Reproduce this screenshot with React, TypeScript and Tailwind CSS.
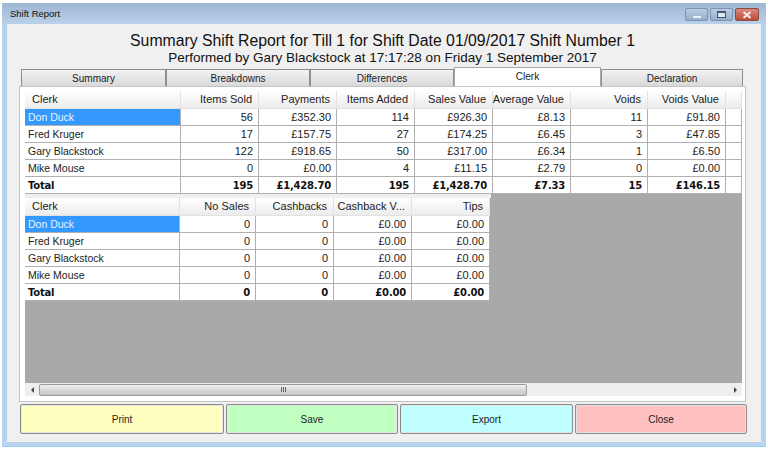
import React from 'react';

interface GridProps {
  columns: string[];
  rows: string[][];
  total: string[];
  gridClass: string;
}

const Grid: React.FC<GridProps> = ({ columns, rows, total, gridClass }) => {
  return (
    <div className={`grid ${gridClass} text-[11px] leading-none text-[#222] whitespace-nowrap`}>
      {columns.map((col, i) => (
        <div
          key={col + i}
          className={`h-[18px] flex items-center bg-gradient-to-b from-white to-[#ececec] border-b border-r border-[#e2e2e2] ${i === 0 ? 'pl-[7px]' : 'justify-end pr-[6px]'}`}
        >
          {col}
        </div>
      ))}
      {rows.map((row, r) =>
        row.map((cell, c) => (
          <div
            key={`${r}-${c}`}
            className={`h-[17px] flex items-center border-b border-r border-[#b0b0b0] ${c === 0 ? 'pl-[3px] text-[10.5px]' : 'justify-end pr-[5px]'} ${c === 0 && r === 0 ? 'bg-[#3399ff] text-[#e8f3ff]' : 'bg-white'}`}
          >
            {cell}
          </div>
        )),
      )}
      {total.map((cell, c) => (
        <div
          key={`t-${c}`}
          className={`h-[17px] flex items-center pt-[1px] bg-white border-b border-r border-[#b0b0b0] font-['DejaVu_Sans',sans-serif] font-bold text-[10px] tracking-[-0.2px] text-[#111] ${c === 0 ? 'pl-[3px]' : 'justify-end pr-[5px]'}`}
        >
          {cell}
        </div>
      ))}
    </div>
  );
};

const tabs = ['Summary', 'Breakdowns', 'Differences', 'Clerk', 'Declaration'];
const tabWidths = ['w-[145px]', 'w-[144px]', 'w-[144px]', 'w-[147px]', 'w-[142px]'];

const buttons = [
  { label: 'Print', cls: 'w-[204px] bg-[#ffffc0]' },
  { label: 'Save', cls: 'w-[172px] bg-[#c0ffc0]' },
  { label: 'Export', cls: 'w-[173px] bg-[#c0ffff]' },
  { label: 'Close', cls: 'w-[172px] bg-[#ffc0c0]' },
];

export default function App() {
  return (
    <div className="w-[768px] h-[449px] bg-white pt-[3px] pl-[2px] font-['Liberation_Sans',sans-serif]">
      <div className="w-[764px] h-[444px] flex flex-col bg-[#b9d3ee] rounded-t-[3px] border-b border-[#8fd4f0]">
        {/* title bar */}
        <div className="h-[21px] shrink-0 flex items-start justify-between pl-[8px] pr-[7px] pt-[5px] bg-gradient-to-b from-[#9db6d2] to-[#b9d1ea]">
          <span className="text-[9.5px] leading-[12px] text-[#111]">Shift Report</span>
          <div className="flex gap-[2px]">
            <div className="w-[23px] h-[13px] flex items-end justify-center pb-[2px] rounded-[2px] border border-[#7d92ac] bg-gradient-to-b from-[#b8cde4] to-[#94aecb]">
              <div className="w-[8px] h-[2px] bg-[#eef3f8]" />
            </div>
            <div className="w-[23px] h-[13px] flex items-center justify-center rounded-[2px] border border-[#7d92ac] bg-gradient-to-b from-[#b8cde4] to-[#94aecb]">
              <div className="w-[9px] h-[7px] border border-t-2 border-[#3f5570] bg-[#dfe8f2]" />
            </div>
            <div className="w-[24px] h-[13px] flex items-center justify-center rounded-[2px] border border-[#8a4a3f] bg-gradient-to-b from-[#d98a7c] to-[#bb4a38]">
              <svg width="10" height="8" viewBox="0 0 10 8">
                <path d="M1.5 1 L8.5 7 M8.5 1 L1.5 7" stroke="#f5f0ee" strokeWidth="2" />
              </svg>
            </div>
          </div>
        </div>

        {/* client area */}
        <div className="mx-[5px] w-[754px] h-[418px] flex flex-col bg-[#f0f0f0] pl-[12px]">
          <div className="w-[727px] h-[43px] shrink-0 flex flex-col items-center text-[#111] pt-[7px]">
            <div className="text-[15.8px] leading-[19px]">Summary Shift Report for Till 1 for Shift Date 01/09/2017 Shift Number 1</div>
            <div className="text-[13.5px] leading-[16px]">Performed by Gary Blackstock at 17:17:28 on Friday 1 September 2017</div>
          </div>

          {/* tabs */}
          <div className="h-[19px] shrink-0 flex items-end pl-[2px]">
            {tabs.map((tab, i) =>
              tab === 'Clerk' ? (
                <div
                  key={tab}
                  className={`${tabWidths[i]} h-[19px] flex items-start justify-center pt-[2px] bg-white border border-b-0 border-[#a8a8a8] text-[10px] leading-[13px] text-[#222]`}
                >
                  {tab}
                </div>
              ) : (
                <div
                  key={tab}
                  className={`${tabWidths[i]} h-[17px] flex items-center justify-center bg-gradient-to-b from-[#f2f2f2] to-[#d9d9d9] border border-b-0 border-[#8e8e8e] text-[10px] text-[#222]`}
                >
                  {tab}
                </div>
              ),
            )}
          </div>

          {/* tab panel */}
          <div className="w-[727px] h-[316px] shrink-0 flex flex-col bg-white border border-[#c4c4c4] pl-[5px] pr-[3px] pt-[4px] pb-[5px]">
            <div className="flex-1 flex flex-col bg-[#a9a9a9]">
              <Grid
                gridClass="grid-cols-[156px_78px_78px_78px_78px_78px_77px_78px_16px]"
                columns={['Clerk', 'Items Sold', 'Payments', 'Items Added', 'Sales Value', 'Average Value', 'Voids', 'Voids Value', '']}
                rows={[
                  ['Don Duck', '56', '£352.30', '114', '£926.30', '£8.13', '11', '£91.80', ''],
                  ['Fred Kruger', '17', '£157.75', '27', '£174.25', '£6.45', '3', '£47.85', ''],
                  ['Gary Blackstock', '122', '£918.65', '50', '£317.00', '£6.34', '1', '£6.50', ''],
                  ['Mike Mouse', '0', '£0.00', '4', '£11.15', '£2.79', '0', '£0.00', ''],
                ]}
                total={['Total', '195', '£1,428.70', '195', '£1,428.70', '£7.33', '15', '£146.15', '']}
              />
              <div className="h-[4px] bg-[#f0f0f0] w-[466px]" />
              <Grid
                gridClass="w-[465px] grid-cols-[155px_76px_78px_78px_78px]"
                columns={['Clerk', 'No Sales', 'Cashbacks', 'Cashback V...', 'Tips']}
                rows={[
                  ['Don Duck', '0', '0', '£0.00', '£0.00'],
                  ['Fred Kruger', '0', '0', '£0.00', '£0.00'],
                  ['Gary Blackstock', '0', '0', '£0.00', '£0.00'],
                  ['Mike Mouse', '0', '0', '£0.00', '£0.00'],
                ]}
                total={['Total', '0', '0', '£0.00', '£0.00']}
              />
            </div>
            {/* scrollbar */}
            <div className="h-[13px] shrink-0 flex items-center bg-[#efefef]">
              <div className="w-[14px] flex justify-center">
                <div className="w-0 h-0 border-y-[3px] border-y-transparent border-r-[3px] border-r-[#444]" />
              </div>
              <div className="w-[488px] h-[12px] flex items-center justify-center rounded-[2px] border border-[#9a9a9a] bg-gradient-to-b from-[#f0f0f0] to-[#c4c4c4]">
                <div className="flex gap-[1px]">
                  <div className="w-[1px] h-[5px] bg-[#666]" />
                  <div className="w-[1px] h-[5px] bg-[#666]" />
                  <div className="w-[1px] h-[5px] bg-[#666]" />
                </div>
              </div>
              <div className="flex-1 flex justify-end pr-[5px]">
                <div className="w-0 h-0 border-y-[3px] border-y-transparent border-l-[3px] border-l-[#444]" />
              </div>
            </div>
          </div>

          {/* buttons */}
          <div className="mt-[2px] flex gap-[2px] pl-[1px]">
            {buttons.map((b) => (
              <div
                key={b.label}
                className={`${b.cls} h-[30px] flex items-center justify-center rounded-[2px] border border-[#8c8c8c] shadow-[inset_0_0_0_1px_#e4e4e4] text-[10px] text-[#222]`}
              >
                {b.label}
              </div>
            ))}
          </div>
        </div>
      </div>
    </div>
  );
}
